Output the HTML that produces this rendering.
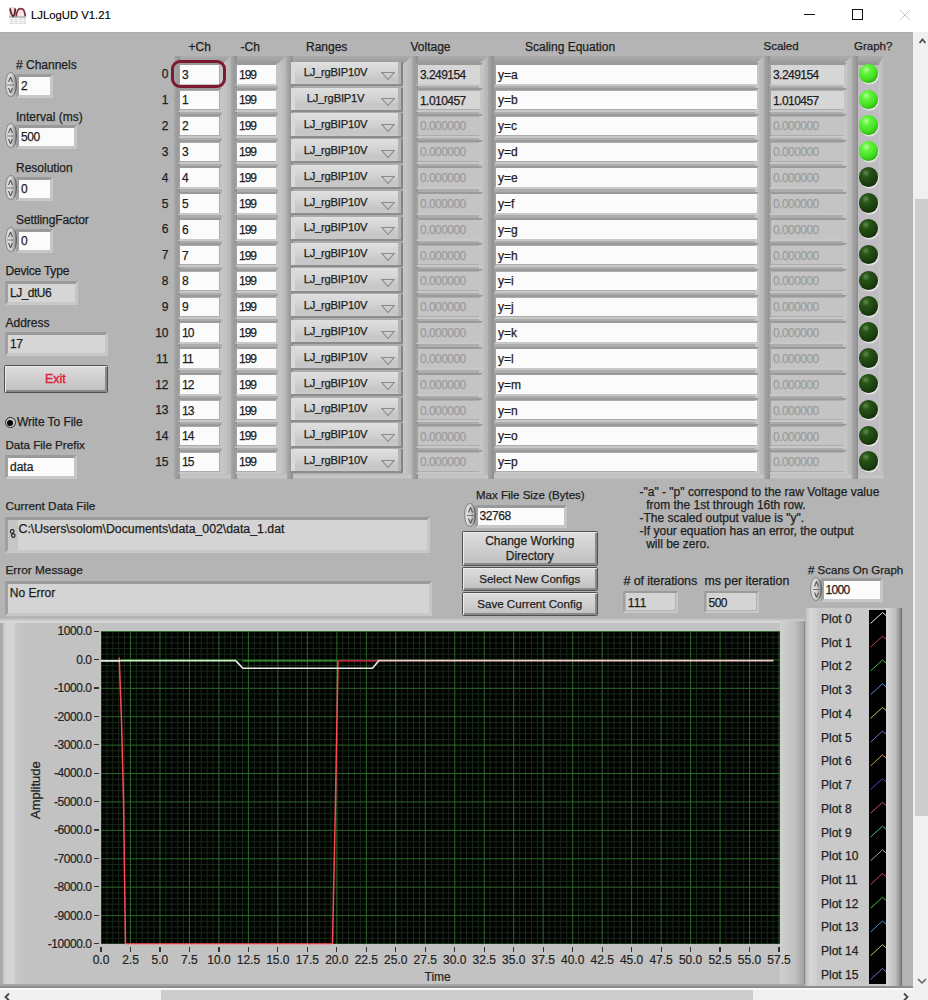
<!DOCTYPE html><html><head><meta charset="utf-8"><title>LJLogUD V1.21</title><style>
*{margin:0;padding:0;box-sizing:border-box}
html,body{width:928px;height:1000px;overflow:hidden;background:#b4b4b4;font-family:"Liberation Sans",sans-serif;font-size:12px;color:#1e1e1e}
.ab{position:absolute}
.t{position:absolute;white-space:pre;line-height:1;-webkit-text-stroke:0.25px currentColor}
.w{position:absolute;background:#fbfbfb}
.fr{position:absolute;border-style:solid;border-width:3px;border-color:#9a9a9a #c6c6c6 #c8c8c8 #a0a0a0}
.col{position:absolute;border-style:solid;border-width:1.5px 4px 4px 6px;border-color:#a2a2a2 #c9c9c9 #c6c6c6 #cbcbcb;background:#adadad}
.coli{position:absolute;border-left:2.5px solid #9a9a9a;border-right:2px solid #8f8f8f}
.btn{position:absolute;border:1.5px solid #505050;border-radius:1.5px;background:linear-gradient(#dedede,#cdcdcd 55%,#bfbfbf);box-shadow:inset 1px 1px 0 #ececec,inset -2px -2px 0 #8a8a8a}
.ring{position:absolute;background:linear-gradient(#e0e0e0,#d3d3d3 45%,#c6c6c6 80%,#c9c9c9);border-bottom:2.3px solid #8c8c8c;border-right:2.5px solid #858585;box-shadow:inset 4px 0 0 #dadada,inset -3px 0 0 #b4b4b4}
.spin{position:absolute;border-radius:50%;border:1px solid #8c8c8c;border-right-color:#5e5e5e;background:linear-gradient(90deg,#c4c4c4,#e2e2e2 25%,#d0d0d0 55%,#a8a8a8 85%,#7a7a7a);}
.led{position:absolute;width:19px;height:19.5px;border-radius:50%}
.on{background:radial-gradient(circle at 38% 30%,#b8ff9c 0,#62f43e 22%,#44e020 55%,#2aa214 85%,#1e6e12 100%);box-shadow:1px 1.5px 0 #dfe8df}
.off{background:radial-gradient(circle at 36% 30%,#5e8e4c 0,#285418 22%,#1c4010 55%,#112a08 85%,#081604 100%);box-shadow:1px 1.5px 0 #e4e4e4}
</style></head><body>
<div class="ab" style="left:0;top:0;width:928px;height:32px;background:#fff"></div>
<svg class="ab" style="left:0;top:0" width="34" height="30" viewBox="0 0 34 30"><rect x="9" y="7" width="6.5" height="9" fill="#f6dcdc"/><rect x="17" y="9" width="8" height="7" fill="#fbe6e6"/><g stroke="#d8d8d8" stroke-width="0.8" fill="none"><path d="M9 19.3H26M9 21.5H26M9 23.4H26M16 17V24M21 17V24M25 17V24M12 17V24"/></g><path d="M9 17H25.8" stroke="#9a9a9a" stroke-width="1.2"/><path d="M10 8.5C10.8 12 11.5 16 13.2 16.2C14.8 16.4 15 11 15.3 8.3" fill="none" stroke="#5c2a2c" stroke-width="1.9"/><path d="M16.3 16.5C16.5 12 17.8 8.7 20.8 8.6C23.8 8.5 25 12 25.2 16.3" fill="none" stroke="#7c3444" stroke-width="1.7"/></svg>
<div class="t" style="left:31px;top:9.834549999999998px;font-size:11.3px;color:#000;-webkit-text-stroke:0.15px #000">LJLogUD V1.21</div>
<div class="ab" style="left:804px;top:14px;width:10.5px;height:1px;background:#111"></div>
<div class="ab" style="left:852px;top:9px;width:10.5px;height:10.5px;border:1px solid #111"></div>
<svg class="ab" style="left:899px;top:9px" width="12" height="12"><path d="M0.5 0.5L11.5 11.5M11.5 0.5L0.5 11.5" stroke="#c8c8c8" stroke-width="1"/></svg>
<div class="ab" style="left:0;top:32px;width:913px;height:954px;background:#b4b4b4;border-top:1px solid #acacac"></div>
<div class="t" style="left:16px;top:58.84px;font-size:12px;color:#1e1e1e;"># Channels</div>
<div class="fr" style="left:16px;top:74px;width:36.5px;height:24px;border-width:3px"></div>
<div class="w" style="left:19px;top:77px;width:30.5px;height:18px;background:#fbfbfb"></div>
<div class="t" style="left:21px;top:79.84px;font-size:12px;color:#1e1e1e;">2</div>
<div class="spin" style="left:4.5px;top:72.0px;width:12px;height:24.5px"></div>
<svg class="ab" style="left:4px;top:72.5px" width="13" height="24"><path d="M6.5 4.0L4.5 9.0M6.5 4.0L8.5 9.0M6.5 20.0L4.5 15.0M6.5 20.0L8.5 15.0" stroke="#555" stroke-width="1.1" fill="none"/><path d="M3 12.0H10" stroke="#777" stroke-width="1"/></svg>
<div class="t" style="left:16px;top:110.84px;font-size:12px;color:#1e1e1e;">Interval (ms)</div>
<div class="fr" style="left:16px;top:125px;width:60.5px;height:24px;border-width:3px"></div>
<div class="w" style="left:19px;top:128px;width:54.5px;height:18px;background:#fbfbfb"></div>
<div class="t" style="left:21px;top:130.84px;font-size:12px;color:#1e1e1e;letter-spacing:-0.4px;">500</div>
<div class="spin" style="left:4.5px;top:123.0px;width:12px;height:24.5px"></div>
<svg class="ab" style="left:4px;top:123.5px" width="13" height="24"><path d="M6.5 4.0L4.5 9.0M6.5 4.0L8.5 9.0M6.5 20.0L4.5 15.0M6.5 20.0L8.5 15.0" stroke="#555" stroke-width="1.1" fill="none"/><path d="M3 12.0H10" stroke="#777" stroke-width="1"/></svg>
<div class="t" style="left:16px;top:162.34px;font-size:12px;color:#1e1e1e;">Resolution</div>
<div class="fr" style="left:16px;top:177px;width:36.5px;height:24px;border-width:3px"></div>
<div class="w" style="left:19px;top:180px;width:30.5px;height:18px;background:#fbfbfb"></div>
<div class="t" style="left:21px;top:182.84px;font-size:12px;color:#1e1e1e;">0</div>
<div class="spin" style="left:4.5px;top:175.0px;width:12px;height:24.5px"></div>
<svg class="ab" style="left:4px;top:175.5px" width="13" height="24"><path d="M6.5 4.0L4.5 9.0M6.5 4.0L8.5 9.0M6.5 20.0L4.5 15.0M6.5 20.0L8.5 15.0" stroke="#555" stroke-width="1.1" fill="none"/><path d="M3 12.0H10" stroke="#777" stroke-width="1"/></svg>
<div class="t" style="left:16px;top:213.84px;font-size:12px;color:#1e1e1e;letter-spacing:-0.1px;">SettlingFactor</div>
<div class="fr" style="left:16px;top:229px;width:36.5px;height:24px;border-width:3px"></div>
<div class="w" style="left:19px;top:232px;width:30.5px;height:18px;background:#fbfbfb"></div>
<div class="t" style="left:21px;top:234.84px;font-size:12px;color:#1e1e1e;">0</div>
<div class="spin" style="left:4.5px;top:227.0px;width:12px;height:24.5px"></div>
<svg class="ab" style="left:4px;top:227.5px" width="13" height="24"><path d="M6.5 4.0L4.5 9.0M6.5 4.0L8.5 9.0M6.5 20.0L4.5 15.0M6.5 20.0L8.5 15.0" stroke="#555" stroke-width="1.1" fill="none"/><path d="M3 12.0H10" stroke="#777" stroke-width="1"/></svg>
<div class="t" style="left:5.5px;top:265.14px;font-size:12px;color:#1e1e1e;letter-spacing:-0.2px;">Device Type</div>
<div class="fr" style="left:5px;top:280.5px;width:72.5px;height:24.5px;border-width:3px"></div>
<div class="w" style="left:8px;top:283.5px;width:66.5px;height:18.5px;background:#d6d6d6"></div>
<div class="t" style="left:10px;top:286.84px;font-size:12px;color:#1e1e1e;letter-spacing:-0.5px;">LJ_dtU6</div>
<div class="t" style="left:5.5px;top:316.84px;font-size:12px;color:#1e1e1e;">Address</div>
<div class="fr" style="left:5px;top:331.5px;width:103px;height:24.5px;border-width:3px"></div>
<div class="w" style="left:8px;top:334.5px;width:97px;height:18.5px;background:#d6d6d6"></div>
<div class="t" style="left:10px;top:337.84px;font-size:12px;color:#1e1e1e;letter-spacing:-0.5px;">17</div>
<div class="btn" style="left:4px;top:365px;width:104px;height:28px"></div>
<div class="t" style="left:45px;top:373.42px;font-size:12.5px;color:#e0203a;-webkit-text-stroke:0.4px #e0203a">Exit</div>
<div class="ab" style="left:4.5px;top:417px;width:11px;height:11px;border-radius:50%;border:1.2px solid #2a2a2a;background:#c8c8c8"></div>
<div class="ab" style="left:7px;top:419.5px;width:6px;height:6px;border-radius:50%;background:#000"></div>
<div class="t" style="left:17px;top:415.84px;font-size:12px;color:#1e1e1e;letter-spacing:-0.05px;">Write To File</div>
<div class="t" style="left:5.5px;top:439.18px;font-size:11.6px;color:#1e1e1e;">Data File Prefix</div>
<div class="fr" style="left:5px;top:454.5px;width:71.5px;height:24px;border-width:3px"></div>
<div class="w" style="left:8px;top:457.5px;width:65.5px;height:18px;background:#fbfbfb"></div>
<div class="t" style="left:10px;top:460.84px;font-size:12px;color:#1e1e1e;">data</div>
<div class="t" style="left:188.5px;top:40.84px;font-size:12px;color:#1e1e1e;">+Ch</div>
<div class="t" style="left:240.5px;top:40.84px;font-size:12px;color:#1e1e1e;">-Ch</div>
<div class="t" style="left:306px;top:40.84px;font-size:12px;color:#1e1e1e;">Ranges</div>
<div class="t" style="left:410.5px;top:40.84px;font-size:12px;color:#1e1e1e;">Voltage</div>
<div class="t" style="left:525px;top:40.84px;font-size:12px;color:#1e1e1e;">Scaling Equation</div>
<div class="t" style="left:763.5px;top:41.27px;font-size:11.5px;color:#1e1e1e;">Scaled</div>
<div class="t" style="left:854px;top:41.27px;font-size:11.5px;color:#1e1e1e;">Graph?</div>
<div class="ab" style="left:174px;top:56px;width:57px;height:422.5px;background:#acacac"></div>
<div class="ab" style="left:174px;top:56px;width:57px;height:8.5px;background:linear-gradient(#acacac,#a2a2a2 50%,#8f8f8f)"></div>
<div class="ab" style="left:174px;top:56px;width:6px;height:422.5px;background:linear-gradient(90deg,#a8a8a8,#9c9c9c 50%,#8c8c8c)"></div>
<div class="ab" style="left:222px;top:56px;width:9px;height:422.5px;background:linear-gradient(90deg,#c6c6c6,#c2c2c2 40%,#b4b4b4);clip-path:polygon(0 8px,9px 0,9px 100%,0 100%)"></div>
<div class="ab" style="left:180px;top:474px;width:51px;height:4.5px;background:linear-gradient(#bdbdbd,#c8c8c8 60%,#b8b8b8)"></div>
<div class="ab" style="left:231px;top:56px;width:55.5px;height:422.5px;background:#acacac"></div>
<div class="ab" style="left:231px;top:56px;width:55.5px;height:8.5px;background:linear-gradient(#acacac,#a2a2a2 50%,#8f8f8f)"></div>
<div class="ab" style="left:231px;top:56px;width:6px;height:422.5px;background:linear-gradient(90deg,#a8a8a8,#9c9c9c 50%,#8c8c8c)"></div>
<div class="ab" style="left:277.5px;top:56px;width:9px;height:422.5px;background:linear-gradient(90deg,#c6c6c6,#c2c2c2 40%,#b4b4b4);clip-path:polygon(0 8px,9px 0,9px 100%,0 100%)"></div>
<div class="ab" style="left:237px;top:474px;width:49.5px;height:4.5px;background:linear-gradient(#bdbdbd,#c8c8c8 60%,#b8b8b8)"></div>
<div class="ab" style="left:286.5px;top:56px;width:125.5px;height:422.5px;background:#acacac"></div>
<div class="ab" style="left:286.5px;top:56px;width:125.5px;height:8.5px;background:linear-gradient(#acacac,#a2a2a2 50%,#8f8f8f)"></div>
<div class="ab" style="left:286.5px;top:56px;width:6px;height:422.5px;background:linear-gradient(90deg,#a8a8a8,#9c9c9c 50%,#8c8c8c)"></div>
<div class="ab" style="left:403px;top:56px;width:9px;height:422.5px;background:linear-gradient(90deg,#c6c6c6,#c2c2c2 40%,#b4b4b4);clip-path:polygon(0 8px,9px 0,9px 100%,0 100%)"></div>
<div class="ab" style="left:292.5px;top:474px;width:119.5px;height:4.5px;background:linear-gradient(#bdbdbd,#c8c8c8 60%,#b8b8b8)"></div>
<div class="ab" style="left:412px;top:56px;width:76px;height:422.5px;background:#acacac"></div>
<div class="ab" style="left:412px;top:56px;width:76px;height:8.5px;background:linear-gradient(#acacac,#a2a2a2 50%,#8f8f8f)"></div>
<div class="ab" style="left:412px;top:56px;width:6px;height:422.5px;background:linear-gradient(90deg,#a8a8a8,#9c9c9c 50%,#8c8c8c)"></div>
<div class="ab" style="left:479px;top:56px;width:9px;height:422.5px;background:linear-gradient(90deg,#c6c6c6,#c2c2c2 40%,#b4b4b4);clip-path:polygon(0 8px,9px 0,9px 100%,0 100%)"></div>
<div class="ab" style="left:418px;top:474px;width:70px;height:4.5px;background:linear-gradient(#bdbdbd,#c8c8c8 60%,#b8b8b8)"></div>
<div class="ab" style="left:488px;top:56px;width:276px;height:422.5px;background:#acacac"></div>
<div class="ab" style="left:488px;top:56px;width:276px;height:8.5px;background:linear-gradient(#acacac,#a2a2a2 50%,#8f8f8f)"></div>
<div class="ab" style="left:488px;top:56px;width:6px;height:422.5px;background:linear-gradient(90deg,#a8a8a8,#9c9c9c 50%,#8c8c8c)"></div>
<div class="ab" style="left:755px;top:56px;width:9px;height:422.5px;background:linear-gradient(90deg,#c6c6c6,#c2c2c2 40%,#b4b4b4);clip-path:polygon(0 8px,9px 0,9px 100%,0 100%)"></div>
<div class="ab" style="left:494px;top:474px;width:270px;height:4.5px;background:linear-gradient(#bdbdbd,#c8c8c8 60%,#b8b8b8)"></div>
<div class="ab" style="left:764px;top:56px;width:88px;height:422.5px;background:#acacac"></div>
<div class="ab" style="left:764px;top:56px;width:88px;height:8.5px;background:linear-gradient(#acacac,#a2a2a2 50%,#8f8f8f)"></div>
<div class="ab" style="left:764px;top:56px;width:6px;height:422.5px;background:linear-gradient(90deg,#a8a8a8,#9c9c9c 50%,#8c8c8c)"></div>
<div class="ab" style="left:843px;top:56px;width:9px;height:422.5px;background:linear-gradient(90deg,#c6c6c6,#c2c2c2 40%,#b4b4b4);clip-path:polygon(0 8px,9px 0,9px 100%,0 100%)"></div>
<div class="ab" style="left:770px;top:474px;width:82px;height:4.5px;background:linear-gradient(#bdbdbd,#c8c8c8 60%,#b8b8b8)"></div>
<div class="ab" style="left:852px;top:56px;width:32px;height:422.5px;background:#bfbdc2"></div>
<div class="ab" style="left:852px;top:56px;width:32px;height:8.5px;background:linear-gradient(#acacac,#a2a2a2 50%,#8f8f8f)"></div>
<div class="ab" style="left:852px;top:56px;width:6px;height:422.5px;background:linear-gradient(90deg,#a8a8a8,#9c9c9c 50%,#8c8c8c)"></div>
<div class="ab" style="left:879px;top:56px;width:5px;height:422.5px;background:linear-gradient(90deg,#c6c6c6,#c2c2c2 40%,#b4b4b4);clip-path:polygon(0 8px,5px 0,5px 100%,0 100%)"></div>
<div class="ab" style="left:858px;top:474px;width:26px;height:4.5px;background:linear-gradient(#bdbdbd,#c8c8c8 60%,#b8b8b8)"></div>
<div class="t" style="left:140px;width:28.5px;text-align:right;top:68.44px;font-size:12px">0</div>
<div class="fr" style="left:177.5px;top:62.5px;width:44.0px;height:23.5px;border-width:2.5px"></div>
<div class="w" style="left:180px;top:65.0px;width:39px;height:18.5px;background:#fbfbfb"></div>
<div class="t" style="left:182px;top:68.64px;font-size:12px;color:#1e1e1e;letter-spacing:-0.8px;">3</div>
<div class="fr" style="left:234.5px;top:62.5px;width:43.5px;height:23.5px;border-width:2.5px"></div>
<div class="w" style="left:237px;top:65.0px;width:38.5px;height:18.5px;background:#fbfbfb"></div>
<div class="t" style="left:239px;top:68.64px;font-size:12px;color:#1e1e1e;letter-spacing:-1px;">199</div>
<div class="ring" style="left:290.7px;top:61.70px;width:112.3px;height:24.2px"></div>
<div class="t" style="left:291px;width:89px;text-align:center;top:67.42px;font-size:11.2px;letter-spacing:-0.2px">LJ_rgBIP10V</div>
<svg class="ab" style="left:381px;top:72.30px" width="14" height="8"><path d="M0.8 0.5H13.2L7 7.5Z" fill="none" stroke="#8a8a8a" stroke-width="1.1"/></svg>
<div class="fr" style="left:415.5px;top:62.5px;width:67.0px;height:23.5px;border-width:2.5px"></div>
<div class="w" style="left:418px;top:65.0px;width:62px;height:18.5px;background:#d6d6d6"></div>
<div class="t" style="left:420px;top:68.74px;font-size:12px;color:#1e1e1e;letter-spacing:-0.55px;">3.249154</div>
<div class="fr" style="left:768.5px;top:62.5px;width:78.0px;height:23.5px;border-width:2.5px"></div>
<div class="w" style="left:771px;top:65.0px;width:73px;height:18.5px;background:#d6d6d6"></div>
<div class="t" style="left:773px;top:68.74px;font-size:12px;color:#1e1e1e;letter-spacing:-0.55px;">3.249154</div>
<div class="fr" style="left:493.5px;top:62.5px;width:265.5px;height:23.5px;border-width:2.5px"></div>
<div class="w" style="left:496px;top:65.0px;width:260.5px;height:18.5px;background:#fbfbfb"></div>
<div class="t" style="left:498px;top:68.64px;font-size:12px;color:#1e1e1e;">y=a</div>
<div class="led on" style="left:859px;top:63.80px"></div>
<div class="t" style="left:140px;width:28.5px;text-align:right;top:94.28px;font-size:12px">1</div>
<div class="fr" style="left:177.5px;top:88.34px;width:44.0px;height:23.5px;border-width:2.5px"></div>
<div class="w" style="left:180px;top:90.84px;width:39px;height:18.5px;background:#fbfbfb"></div>
<div class="t" style="left:182px;top:94.48px;font-size:12px;color:#1e1e1e;letter-spacing:-0.8px;">1</div>
<div class="fr" style="left:234.5px;top:88.34px;width:43.5px;height:23.5px;border-width:2.5px"></div>
<div class="w" style="left:237px;top:90.84px;width:38.5px;height:18.5px;background:#fbfbfb"></div>
<div class="t" style="left:239px;top:94.48px;font-size:12px;color:#1e1e1e;letter-spacing:-1px;">199</div>
<div class="ring" style="left:290.7px;top:87.54px;width:112.3px;height:24.2px"></div>
<div class="t" style="left:291px;width:89px;text-align:center;top:93.26px;font-size:11.2px;letter-spacing:-0.2px">LJ_rgBIP1V</div>
<svg class="ab" style="left:381px;top:98.14px" width="14" height="8"><path d="M0.8 0.5H13.2L7 7.5Z" fill="none" stroke="#8a8a8a" stroke-width="1.1"/></svg>
<div class="fr" style="left:415.5px;top:88.34px;width:67.0px;height:23.5px;border-width:2.5px"></div>
<div class="w" style="left:418px;top:90.84px;width:62px;height:18.5px;background:#d6d6d6"></div>
<div class="t" style="left:420px;top:94.58px;font-size:12px;color:#1e1e1e;letter-spacing:-0.55px;">1.010457</div>
<div class="fr" style="left:768.5px;top:88.34px;width:78.0px;height:23.5px;border-width:2.5px"></div>
<div class="w" style="left:771px;top:90.84px;width:73px;height:18.5px;background:#d6d6d6"></div>
<div class="t" style="left:773px;top:94.58px;font-size:12px;color:#1e1e1e;letter-spacing:-0.55px;">1.010457</div>
<div class="fr" style="left:493.5px;top:88.34px;width:265.5px;height:23.5px;border-width:2.5px"></div>
<div class="w" style="left:496px;top:90.84px;width:260.5px;height:18.5px;background:#fbfbfb"></div>
<div class="t" style="left:498px;top:94.48px;font-size:12px;color:#1e1e1e;">y=b</div>
<div class="led on" style="left:859px;top:89.64px"></div>
<div class="t" style="left:140px;width:28.5px;text-align:right;top:120.12px;font-size:12px">2</div>
<div class="fr" style="left:177.5px;top:114.18px;width:44.0px;height:23.5px;border-width:2.5px"></div>
<div class="w" style="left:180px;top:116.68px;width:39px;height:18.5px;background:#fbfbfb"></div>
<div class="t" style="left:182px;top:120.32px;font-size:12px;color:#1e1e1e;letter-spacing:-0.8px;">2</div>
<div class="fr" style="left:234.5px;top:114.18px;width:43.5px;height:23.5px;border-width:2.5px"></div>
<div class="w" style="left:237px;top:116.68px;width:38.5px;height:18.5px;background:#fbfbfb"></div>
<div class="t" style="left:239px;top:120.32px;font-size:12px;color:#1e1e1e;letter-spacing:-1px;">199</div>
<div class="ring" style="left:290.7px;top:113.38px;width:112.3px;height:24.2px"></div>
<div class="t" style="left:291px;width:89px;text-align:center;top:119.10px;font-size:11.2px;letter-spacing:-0.2px">LJ_rgBIP10V</div>
<svg class="ab" style="left:381px;top:123.98px" width="14" height="8"><path d="M0.8 0.5H13.2L7 7.5Z" fill="none" stroke="#8a8a8a" stroke-width="1.1"/></svg>
<div class="fr" style="left:415.5px;top:114.18px;width:67.0px;height:23.5px;border-width:2.5px"></div>
<div class="w" style="left:418px;top:116.68px;width:62px;height:18.5px;background:#c4c4c4"></div>
<div class="t" style="left:420px;top:120.42px;font-size:12px;color:#9c9c9c;letter-spacing:-0.55px;">0.000000</div>
<div class="fr" style="left:768.5px;top:114.18px;width:78.0px;height:23.5px;border-width:2.5px"></div>
<div class="w" style="left:771px;top:116.68px;width:73px;height:18.5px;background:#c4c4c4"></div>
<div class="t" style="left:773px;top:120.42px;font-size:12px;color:#9c9c9c;letter-spacing:-0.55px;">0.000000</div>
<div class="fr" style="left:493.5px;top:114.18px;width:265.5px;height:23.5px;border-width:2.5px"></div>
<div class="w" style="left:496px;top:116.68px;width:260.5px;height:18.5px;background:#fbfbfb"></div>
<div class="t" style="left:498px;top:120.32px;font-size:12px;color:#1e1e1e;">y=c</div>
<div class="led on" style="left:859px;top:115.48px"></div>
<div class="t" style="left:140px;width:28.5px;text-align:right;top:145.96px;font-size:12px">3</div>
<div class="fr" style="left:177.5px;top:140.01999999999998px;width:44.0px;height:23.5px;border-width:2.5px"></div>
<div class="w" style="left:180px;top:142.51999999999998px;width:39px;height:18.5px;background:#fbfbfb"></div>
<div class="t" style="left:182px;top:146.16px;font-size:12px;color:#1e1e1e;letter-spacing:-0.8px;">3</div>
<div class="fr" style="left:234.5px;top:140.01999999999998px;width:43.5px;height:23.5px;border-width:2.5px"></div>
<div class="w" style="left:237px;top:142.51999999999998px;width:38.5px;height:18.5px;background:#fbfbfb"></div>
<div class="t" style="left:239px;top:146.16px;font-size:12px;color:#1e1e1e;letter-spacing:-1px;">199</div>
<div class="ring" style="left:290.7px;top:139.22px;width:112.3px;height:24.2px"></div>
<div class="t" style="left:291px;width:89px;text-align:center;top:144.94px;font-size:11.2px;letter-spacing:-0.2px">LJ_rgBIP10V</div>
<svg class="ab" style="left:381px;top:149.82px" width="14" height="8"><path d="M0.8 0.5H13.2L7 7.5Z" fill="none" stroke="#8a8a8a" stroke-width="1.1"/></svg>
<div class="fr" style="left:415.5px;top:140.01999999999998px;width:67.0px;height:23.5px;border-width:2.5px"></div>
<div class="w" style="left:418px;top:142.51999999999998px;width:62px;height:18.5px;background:#c4c4c4"></div>
<div class="t" style="left:420px;top:146.26px;font-size:12px;color:#9c9c9c;letter-spacing:-0.55px;">0.000000</div>
<div class="fr" style="left:768.5px;top:140.01999999999998px;width:78.0px;height:23.5px;border-width:2.5px"></div>
<div class="w" style="left:771px;top:142.51999999999998px;width:73px;height:18.5px;background:#c4c4c4"></div>
<div class="t" style="left:773px;top:146.26px;font-size:12px;color:#9c9c9c;letter-spacing:-0.55px;">0.000000</div>
<div class="fr" style="left:493.5px;top:140.01999999999998px;width:265.5px;height:23.5px;border-width:2.5px"></div>
<div class="w" style="left:496px;top:142.51999999999998px;width:260.5px;height:18.5px;background:#fbfbfb"></div>
<div class="t" style="left:498px;top:146.16px;font-size:12px;color:#1e1e1e;">y=d</div>
<div class="led on" style="left:859px;top:141.32px"></div>
<div class="t" style="left:140px;width:28.5px;text-align:right;top:171.80px;font-size:12px">4</div>
<div class="fr" style="left:177.5px;top:165.86px;width:44.0px;height:23.5px;border-width:2.5px"></div>
<div class="w" style="left:180px;top:168.36px;width:39px;height:18.5px;background:#fbfbfb"></div>
<div class="t" style="left:182px;top:172.00px;font-size:12px;color:#1e1e1e;letter-spacing:-0.8px;">4</div>
<div class="fr" style="left:234.5px;top:165.86px;width:43.5px;height:23.5px;border-width:2.5px"></div>
<div class="w" style="left:237px;top:168.36px;width:38.5px;height:18.5px;background:#fbfbfb"></div>
<div class="t" style="left:239px;top:172.00px;font-size:12px;color:#1e1e1e;letter-spacing:-1px;">199</div>
<div class="ring" style="left:290.7px;top:165.06px;width:112.3px;height:24.2px"></div>
<div class="t" style="left:291px;width:89px;text-align:center;top:170.78px;font-size:11.2px;letter-spacing:-0.2px">LJ_rgBIP10V</div>
<svg class="ab" style="left:381px;top:175.66px" width="14" height="8"><path d="M0.8 0.5H13.2L7 7.5Z" fill="none" stroke="#8a8a8a" stroke-width="1.1"/></svg>
<div class="fr" style="left:415.5px;top:165.86px;width:67.0px;height:23.5px;border-width:2.5px"></div>
<div class="w" style="left:418px;top:168.36px;width:62px;height:18.5px;background:#c4c4c4"></div>
<div class="t" style="left:420px;top:172.10px;font-size:12px;color:#9c9c9c;letter-spacing:-0.55px;">0.000000</div>
<div class="fr" style="left:768.5px;top:165.86px;width:78.0px;height:23.5px;border-width:2.5px"></div>
<div class="w" style="left:771px;top:168.36px;width:73px;height:18.5px;background:#c4c4c4"></div>
<div class="t" style="left:773px;top:172.10px;font-size:12px;color:#9c9c9c;letter-spacing:-0.55px;">0.000000</div>
<div class="fr" style="left:493.5px;top:165.86px;width:265.5px;height:23.5px;border-width:2.5px"></div>
<div class="w" style="left:496px;top:168.36px;width:260.5px;height:18.5px;background:#fbfbfb"></div>
<div class="t" style="left:498px;top:172.00px;font-size:12px;color:#1e1e1e;">y=e</div>
<div class="led off" style="left:859px;top:167.16px"></div>
<div class="t" style="left:140px;width:28.5px;text-align:right;top:197.64px;font-size:12px">5</div>
<div class="fr" style="left:177.5px;top:191.7px;width:44.0px;height:23.5px;border-width:2.5px"></div>
<div class="w" style="left:180px;top:194.2px;width:39px;height:18.5px;background:#fbfbfb"></div>
<div class="t" style="left:182px;top:197.84px;font-size:12px;color:#1e1e1e;letter-spacing:-0.8px;">5</div>
<div class="fr" style="left:234.5px;top:191.7px;width:43.5px;height:23.5px;border-width:2.5px"></div>
<div class="w" style="left:237px;top:194.2px;width:38.5px;height:18.5px;background:#fbfbfb"></div>
<div class="t" style="left:239px;top:197.84px;font-size:12px;color:#1e1e1e;letter-spacing:-1px;">199</div>
<div class="ring" style="left:290.7px;top:190.90px;width:112.3px;height:24.2px"></div>
<div class="t" style="left:291px;width:89px;text-align:center;top:196.62px;font-size:11.2px;letter-spacing:-0.2px">LJ_rgBIP10V</div>
<svg class="ab" style="left:381px;top:201.50px" width="14" height="8"><path d="M0.8 0.5H13.2L7 7.5Z" fill="none" stroke="#8a8a8a" stroke-width="1.1"/></svg>
<div class="fr" style="left:415.5px;top:191.7px;width:67.0px;height:23.5px;border-width:2.5px"></div>
<div class="w" style="left:418px;top:194.2px;width:62px;height:18.5px;background:#c4c4c4"></div>
<div class="t" style="left:420px;top:197.94px;font-size:12px;color:#9c9c9c;letter-spacing:-0.55px;">0.000000</div>
<div class="fr" style="left:768.5px;top:191.7px;width:78.0px;height:23.5px;border-width:2.5px"></div>
<div class="w" style="left:771px;top:194.2px;width:73px;height:18.5px;background:#c4c4c4"></div>
<div class="t" style="left:773px;top:197.94px;font-size:12px;color:#9c9c9c;letter-spacing:-0.55px;">0.000000</div>
<div class="fr" style="left:493.5px;top:191.7px;width:265.5px;height:23.5px;border-width:2.5px"></div>
<div class="w" style="left:496px;top:194.2px;width:260.5px;height:18.5px;background:#fbfbfb"></div>
<div class="t" style="left:498px;top:197.84px;font-size:12px;color:#1e1e1e;">y=f</div>
<div class="led off" style="left:859px;top:193.00px"></div>
<div class="t" style="left:140px;width:28.5px;text-align:right;top:223.48px;font-size:12px">6</div>
<div class="fr" style="left:177.5px;top:217.54px;width:44.0px;height:23.5px;border-width:2.5px"></div>
<div class="w" style="left:180px;top:220.04px;width:39px;height:18.5px;background:#fbfbfb"></div>
<div class="t" style="left:182px;top:223.68px;font-size:12px;color:#1e1e1e;letter-spacing:-0.8px;">6</div>
<div class="fr" style="left:234.5px;top:217.54px;width:43.5px;height:23.5px;border-width:2.5px"></div>
<div class="w" style="left:237px;top:220.04px;width:38.5px;height:18.5px;background:#fbfbfb"></div>
<div class="t" style="left:239px;top:223.68px;font-size:12px;color:#1e1e1e;letter-spacing:-1px;">199</div>
<div class="ring" style="left:290.7px;top:216.74px;width:112.3px;height:24.2px"></div>
<div class="t" style="left:291px;width:89px;text-align:center;top:222.46px;font-size:11.2px;letter-spacing:-0.2px">LJ_rgBIP10V</div>
<svg class="ab" style="left:381px;top:227.34px" width="14" height="8"><path d="M0.8 0.5H13.2L7 7.5Z" fill="none" stroke="#8a8a8a" stroke-width="1.1"/></svg>
<div class="fr" style="left:415.5px;top:217.54px;width:67.0px;height:23.5px;border-width:2.5px"></div>
<div class="w" style="left:418px;top:220.04px;width:62px;height:18.5px;background:#c4c4c4"></div>
<div class="t" style="left:420px;top:223.78px;font-size:12px;color:#9c9c9c;letter-spacing:-0.55px;">0.000000</div>
<div class="fr" style="left:768.5px;top:217.54px;width:78.0px;height:23.5px;border-width:2.5px"></div>
<div class="w" style="left:771px;top:220.04px;width:73px;height:18.5px;background:#c4c4c4"></div>
<div class="t" style="left:773px;top:223.78px;font-size:12px;color:#9c9c9c;letter-spacing:-0.55px;">0.000000</div>
<div class="fr" style="left:493.5px;top:217.54px;width:265.5px;height:23.5px;border-width:2.5px"></div>
<div class="w" style="left:496px;top:220.04px;width:260.5px;height:18.5px;background:#fbfbfb"></div>
<div class="t" style="left:498px;top:223.68px;font-size:12px;color:#1e1e1e;">y=g</div>
<div class="led off" style="left:859px;top:218.84px"></div>
<div class="t" style="left:140px;width:28.5px;text-align:right;top:249.32px;font-size:12px">7</div>
<div class="fr" style="left:177.5px;top:243.38px;width:44.0px;height:23.5px;border-width:2.5px"></div>
<div class="w" style="left:180px;top:245.88px;width:39px;height:18.5px;background:#fbfbfb"></div>
<div class="t" style="left:182px;top:249.52px;font-size:12px;color:#1e1e1e;letter-spacing:-0.8px;">7</div>
<div class="fr" style="left:234.5px;top:243.38px;width:43.5px;height:23.5px;border-width:2.5px"></div>
<div class="w" style="left:237px;top:245.88px;width:38.5px;height:18.5px;background:#fbfbfb"></div>
<div class="t" style="left:239px;top:249.52px;font-size:12px;color:#1e1e1e;letter-spacing:-1px;">199</div>
<div class="ring" style="left:290.7px;top:242.58px;width:112.3px;height:24.2px"></div>
<div class="t" style="left:291px;width:89px;text-align:center;top:248.30px;font-size:11.2px;letter-spacing:-0.2px">LJ_rgBIP10V</div>
<svg class="ab" style="left:381px;top:253.18px" width="14" height="8"><path d="M0.8 0.5H13.2L7 7.5Z" fill="none" stroke="#8a8a8a" stroke-width="1.1"/></svg>
<div class="fr" style="left:415.5px;top:243.38px;width:67.0px;height:23.5px;border-width:2.5px"></div>
<div class="w" style="left:418px;top:245.88px;width:62px;height:18.5px;background:#c4c4c4"></div>
<div class="t" style="left:420px;top:249.62px;font-size:12px;color:#9c9c9c;letter-spacing:-0.55px;">0.000000</div>
<div class="fr" style="left:768.5px;top:243.38px;width:78.0px;height:23.5px;border-width:2.5px"></div>
<div class="w" style="left:771px;top:245.88px;width:73px;height:18.5px;background:#c4c4c4"></div>
<div class="t" style="left:773px;top:249.62px;font-size:12px;color:#9c9c9c;letter-spacing:-0.55px;">0.000000</div>
<div class="fr" style="left:493.5px;top:243.38px;width:265.5px;height:23.5px;border-width:2.5px"></div>
<div class="w" style="left:496px;top:245.88px;width:260.5px;height:18.5px;background:#fbfbfb"></div>
<div class="t" style="left:498px;top:249.52px;font-size:12px;color:#1e1e1e;">y=h</div>
<div class="led off" style="left:859px;top:244.68px"></div>
<div class="t" style="left:140px;width:28.5px;text-align:right;top:275.16px;font-size:12px">8</div>
<div class="fr" style="left:177.5px;top:269.22px;width:44.0px;height:23.5px;border-width:2.5px"></div>
<div class="w" style="left:180px;top:271.72px;width:39px;height:18.5px;background:#fbfbfb"></div>
<div class="t" style="left:182px;top:275.36px;font-size:12px;color:#1e1e1e;letter-spacing:-0.8px;">8</div>
<div class="fr" style="left:234.5px;top:269.22px;width:43.5px;height:23.5px;border-width:2.5px"></div>
<div class="w" style="left:237px;top:271.72px;width:38.5px;height:18.5px;background:#fbfbfb"></div>
<div class="t" style="left:239px;top:275.36px;font-size:12px;color:#1e1e1e;letter-spacing:-1px;">199</div>
<div class="ring" style="left:290.7px;top:268.42px;width:112.3px;height:24.2px"></div>
<div class="t" style="left:291px;width:89px;text-align:center;top:274.14px;font-size:11.2px;letter-spacing:-0.2px">LJ_rgBIP10V</div>
<svg class="ab" style="left:381px;top:279.02px" width="14" height="8"><path d="M0.8 0.5H13.2L7 7.5Z" fill="none" stroke="#8a8a8a" stroke-width="1.1"/></svg>
<div class="fr" style="left:415.5px;top:269.22px;width:67.0px;height:23.5px;border-width:2.5px"></div>
<div class="w" style="left:418px;top:271.72px;width:62px;height:18.5px;background:#c4c4c4"></div>
<div class="t" style="left:420px;top:275.46px;font-size:12px;color:#9c9c9c;letter-spacing:-0.55px;">0.000000</div>
<div class="fr" style="left:768.5px;top:269.22px;width:78.0px;height:23.5px;border-width:2.5px"></div>
<div class="w" style="left:771px;top:271.72px;width:73px;height:18.5px;background:#c4c4c4"></div>
<div class="t" style="left:773px;top:275.46px;font-size:12px;color:#9c9c9c;letter-spacing:-0.55px;">0.000000</div>
<div class="fr" style="left:493.5px;top:269.22px;width:265.5px;height:23.5px;border-width:2.5px"></div>
<div class="w" style="left:496px;top:271.72px;width:260.5px;height:18.5px;background:#fbfbfb"></div>
<div class="t" style="left:498px;top:275.36px;font-size:12px;color:#1e1e1e;">y=i</div>
<div class="led off" style="left:859px;top:270.52px"></div>
<div class="t" style="left:140px;width:28.5px;text-align:right;top:301.00px;font-size:12px">9</div>
<div class="fr" style="left:177.5px;top:295.06px;width:44.0px;height:23.5px;border-width:2.5px"></div>
<div class="w" style="left:180px;top:297.56px;width:39px;height:18.5px;background:#fbfbfb"></div>
<div class="t" style="left:182px;top:301.20px;font-size:12px;color:#1e1e1e;letter-spacing:-0.8px;">9</div>
<div class="fr" style="left:234.5px;top:295.06px;width:43.5px;height:23.5px;border-width:2.5px"></div>
<div class="w" style="left:237px;top:297.56px;width:38.5px;height:18.5px;background:#fbfbfb"></div>
<div class="t" style="left:239px;top:301.20px;font-size:12px;color:#1e1e1e;letter-spacing:-1px;">199</div>
<div class="ring" style="left:290.7px;top:294.26px;width:112.3px;height:24.2px"></div>
<div class="t" style="left:291px;width:89px;text-align:center;top:299.98px;font-size:11.2px;letter-spacing:-0.2px">LJ_rgBIP10V</div>
<svg class="ab" style="left:381px;top:304.86px" width="14" height="8"><path d="M0.8 0.5H13.2L7 7.5Z" fill="none" stroke="#8a8a8a" stroke-width="1.1"/></svg>
<div class="fr" style="left:415.5px;top:295.06px;width:67.0px;height:23.5px;border-width:2.5px"></div>
<div class="w" style="left:418px;top:297.56px;width:62px;height:18.5px;background:#c4c4c4"></div>
<div class="t" style="left:420px;top:301.30px;font-size:12px;color:#9c9c9c;letter-spacing:-0.55px;">0.000000</div>
<div class="fr" style="left:768.5px;top:295.06px;width:78.0px;height:23.5px;border-width:2.5px"></div>
<div class="w" style="left:771px;top:297.56px;width:73px;height:18.5px;background:#c4c4c4"></div>
<div class="t" style="left:773px;top:301.30px;font-size:12px;color:#9c9c9c;letter-spacing:-0.55px;">0.000000</div>
<div class="fr" style="left:493.5px;top:295.06px;width:265.5px;height:23.5px;border-width:2.5px"></div>
<div class="w" style="left:496px;top:297.56px;width:260.5px;height:18.5px;background:#fbfbfb"></div>
<div class="t" style="left:498px;top:301.20px;font-size:12px;color:#1e1e1e;">y=j</div>
<div class="led off" style="left:859px;top:296.36px"></div>
<div class="t" style="left:140px;width:28.5px;text-align:right;top:326.84px;font-size:12px">10</div>
<div class="fr" style="left:177.5px;top:320.9px;width:44.0px;height:23.5px;border-width:2.5px"></div>
<div class="w" style="left:180px;top:323.4px;width:39px;height:18.5px;background:#fbfbfb"></div>
<div class="t" style="left:182px;top:327.04px;font-size:12px;color:#1e1e1e;letter-spacing:-0.8px;">10</div>
<div class="fr" style="left:234.5px;top:320.9px;width:43.5px;height:23.5px;border-width:2.5px"></div>
<div class="w" style="left:237px;top:323.4px;width:38.5px;height:18.5px;background:#fbfbfb"></div>
<div class="t" style="left:239px;top:327.04px;font-size:12px;color:#1e1e1e;letter-spacing:-1px;">199</div>
<div class="ring" style="left:290.7px;top:320.10px;width:112.3px;height:24.2px"></div>
<div class="t" style="left:291px;width:89px;text-align:center;top:325.82px;font-size:11.2px;letter-spacing:-0.2px">LJ_rgBIP10V</div>
<svg class="ab" style="left:381px;top:330.70px" width="14" height="8"><path d="M0.8 0.5H13.2L7 7.5Z" fill="none" stroke="#8a8a8a" stroke-width="1.1"/></svg>
<div class="fr" style="left:415.5px;top:320.9px;width:67.0px;height:23.5px;border-width:2.5px"></div>
<div class="w" style="left:418px;top:323.4px;width:62px;height:18.5px;background:#c4c4c4"></div>
<div class="t" style="left:420px;top:327.14px;font-size:12px;color:#9c9c9c;letter-spacing:-0.55px;">0.000000</div>
<div class="fr" style="left:768.5px;top:320.9px;width:78.0px;height:23.5px;border-width:2.5px"></div>
<div class="w" style="left:771px;top:323.4px;width:73px;height:18.5px;background:#c4c4c4"></div>
<div class="t" style="left:773px;top:327.14px;font-size:12px;color:#9c9c9c;letter-spacing:-0.55px;">0.000000</div>
<div class="fr" style="left:493.5px;top:320.9px;width:265.5px;height:23.5px;border-width:2.5px"></div>
<div class="w" style="left:496px;top:323.4px;width:260.5px;height:18.5px;background:#fbfbfb"></div>
<div class="t" style="left:498px;top:327.04px;font-size:12px;color:#1e1e1e;">y=k</div>
<div class="led off" style="left:859px;top:322.20px"></div>
<div class="t" style="left:140px;width:28.5px;text-align:right;top:352.68px;font-size:12px">11</div>
<div class="fr" style="left:177.5px;top:346.74px;width:44.0px;height:23.5px;border-width:2.5px"></div>
<div class="w" style="left:180px;top:349.24px;width:39px;height:18.5px;background:#fbfbfb"></div>
<div class="t" style="left:182px;top:352.88px;font-size:12px;color:#1e1e1e;letter-spacing:-0.8px;">11</div>
<div class="fr" style="left:234.5px;top:346.74px;width:43.5px;height:23.5px;border-width:2.5px"></div>
<div class="w" style="left:237px;top:349.24px;width:38.5px;height:18.5px;background:#fbfbfb"></div>
<div class="t" style="left:239px;top:352.88px;font-size:12px;color:#1e1e1e;letter-spacing:-1px;">199</div>
<div class="ring" style="left:290.7px;top:345.94px;width:112.3px;height:24.2px"></div>
<div class="t" style="left:291px;width:89px;text-align:center;top:351.66px;font-size:11.2px;letter-spacing:-0.2px">LJ_rgBIP10V</div>
<svg class="ab" style="left:381px;top:356.54px" width="14" height="8"><path d="M0.8 0.5H13.2L7 7.5Z" fill="none" stroke="#8a8a8a" stroke-width="1.1"/></svg>
<div class="fr" style="left:415.5px;top:346.74px;width:67.0px;height:23.5px;border-width:2.5px"></div>
<div class="w" style="left:418px;top:349.24px;width:62px;height:18.5px;background:#c4c4c4"></div>
<div class="t" style="left:420px;top:352.98px;font-size:12px;color:#9c9c9c;letter-spacing:-0.55px;">0.000000</div>
<div class="fr" style="left:768.5px;top:346.74px;width:78.0px;height:23.5px;border-width:2.5px"></div>
<div class="w" style="left:771px;top:349.24px;width:73px;height:18.5px;background:#c4c4c4"></div>
<div class="t" style="left:773px;top:352.98px;font-size:12px;color:#9c9c9c;letter-spacing:-0.55px;">0.000000</div>
<div class="fr" style="left:493.5px;top:346.74px;width:265.5px;height:23.5px;border-width:2.5px"></div>
<div class="w" style="left:496px;top:349.24px;width:260.5px;height:18.5px;background:#fbfbfb"></div>
<div class="t" style="left:498px;top:352.88px;font-size:12px;color:#1e1e1e;">y=l</div>
<div class="led off" style="left:859px;top:348.04px"></div>
<div class="t" style="left:140px;width:28.5px;text-align:right;top:378.52px;font-size:12px">12</div>
<div class="fr" style="left:177.5px;top:372.58px;width:44.0px;height:23.5px;border-width:2.5px"></div>
<div class="w" style="left:180px;top:375.08px;width:39px;height:18.5px;background:#fbfbfb"></div>
<div class="t" style="left:182px;top:378.72px;font-size:12px;color:#1e1e1e;letter-spacing:-0.8px;">12</div>
<div class="fr" style="left:234.5px;top:372.58px;width:43.5px;height:23.5px;border-width:2.5px"></div>
<div class="w" style="left:237px;top:375.08px;width:38.5px;height:18.5px;background:#fbfbfb"></div>
<div class="t" style="left:239px;top:378.72px;font-size:12px;color:#1e1e1e;letter-spacing:-1px;">199</div>
<div class="ring" style="left:290.7px;top:371.78px;width:112.3px;height:24.2px"></div>
<div class="t" style="left:291px;width:89px;text-align:center;top:377.50px;font-size:11.2px;letter-spacing:-0.2px">LJ_rgBIP10V</div>
<svg class="ab" style="left:381px;top:382.38px" width="14" height="8"><path d="M0.8 0.5H13.2L7 7.5Z" fill="none" stroke="#8a8a8a" stroke-width="1.1"/></svg>
<div class="fr" style="left:415.5px;top:372.58px;width:67.0px;height:23.5px;border-width:2.5px"></div>
<div class="w" style="left:418px;top:375.08px;width:62px;height:18.5px;background:#c4c4c4"></div>
<div class="t" style="left:420px;top:378.82px;font-size:12px;color:#9c9c9c;letter-spacing:-0.55px;">0.000000</div>
<div class="fr" style="left:768.5px;top:372.58px;width:78.0px;height:23.5px;border-width:2.5px"></div>
<div class="w" style="left:771px;top:375.08px;width:73px;height:18.5px;background:#c4c4c4"></div>
<div class="t" style="left:773px;top:378.82px;font-size:12px;color:#9c9c9c;letter-spacing:-0.55px;">0.000000</div>
<div class="fr" style="left:493.5px;top:372.58px;width:265.5px;height:23.5px;border-width:2.5px"></div>
<div class="w" style="left:496px;top:375.08px;width:260.5px;height:18.5px;background:#fbfbfb"></div>
<div class="t" style="left:498px;top:378.72px;font-size:12px;color:#1e1e1e;">y=m</div>
<div class="led off" style="left:859px;top:373.88px"></div>
<div class="t" style="left:140px;width:28.5px;text-align:right;top:404.36px;font-size:12px">13</div>
<div class="fr" style="left:177.5px;top:398.42px;width:44.0px;height:23.5px;border-width:2.5px"></div>
<div class="w" style="left:180px;top:400.92px;width:39px;height:18.5px;background:#fbfbfb"></div>
<div class="t" style="left:182px;top:404.56px;font-size:12px;color:#1e1e1e;letter-spacing:-0.8px;">13</div>
<div class="fr" style="left:234.5px;top:398.42px;width:43.5px;height:23.5px;border-width:2.5px"></div>
<div class="w" style="left:237px;top:400.92px;width:38.5px;height:18.5px;background:#fbfbfb"></div>
<div class="t" style="left:239px;top:404.56px;font-size:12px;color:#1e1e1e;letter-spacing:-1px;">199</div>
<div class="ring" style="left:290.7px;top:397.62px;width:112.3px;height:24.2px"></div>
<div class="t" style="left:291px;width:89px;text-align:center;top:403.34px;font-size:11.2px;letter-spacing:-0.2px">LJ_rgBIP10V</div>
<svg class="ab" style="left:381px;top:408.22px" width="14" height="8"><path d="M0.8 0.5H13.2L7 7.5Z" fill="none" stroke="#8a8a8a" stroke-width="1.1"/></svg>
<div class="fr" style="left:415.5px;top:398.42px;width:67.0px;height:23.5px;border-width:2.5px"></div>
<div class="w" style="left:418px;top:400.92px;width:62px;height:18.5px;background:#c4c4c4"></div>
<div class="t" style="left:420px;top:404.66px;font-size:12px;color:#9c9c9c;letter-spacing:-0.55px;">0.000000</div>
<div class="fr" style="left:768.5px;top:398.42px;width:78.0px;height:23.5px;border-width:2.5px"></div>
<div class="w" style="left:771px;top:400.92px;width:73px;height:18.5px;background:#c4c4c4"></div>
<div class="t" style="left:773px;top:404.66px;font-size:12px;color:#9c9c9c;letter-spacing:-0.55px;">0.000000</div>
<div class="fr" style="left:493.5px;top:398.42px;width:265.5px;height:23.5px;border-width:2.5px"></div>
<div class="w" style="left:496px;top:400.92px;width:260.5px;height:18.5px;background:#fbfbfb"></div>
<div class="t" style="left:498px;top:404.56px;font-size:12px;color:#1e1e1e;">y=n</div>
<div class="led off" style="left:859px;top:399.72px"></div>
<div class="t" style="left:140px;width:28.5px;text-align:right;top:430.20px;font-size:12px">14</div>
<div class="fr" style="left:177.5px;top:424.26px;width:44.0px;height:23.5px;border-width:2.5px"></div>
<div class="w" style="left:180px;top:426.76px;width:39px;height:18.5px;background:#fbfbfb"></div>
<div class="t" style="left:182px;top:430.40px;font-size:12px;color:#1e1e1e;letter-spacing:-0.8px;">14</div>
<div class="fr" style="left:234.5px;top:424.26px;width:43.5px;height:23.5px;border-width:2.5px"></div>
<div class="w" style="left:237px;top:426.76px;width:38.5px;height:18.5px;background:#fbfbfb"></div>
<div class="t" style="left:239px;top:430.40px;font-size:12px;color:#1e1e1e;letter-spacing:-1px;">199</div>
<div class="ring" style="left:290.7px;top:423.46px;width:112.3px;height:24.2px"></div>
<div class="t" style="left:291px;width:89px;text-align:center;top:429.18px;font-size:11.2px;letter-spacing:-0.2px">LJ_rgBIP10V</div>
<svg class="ab" style="left:381px;top:434.06px" width="14" height="8"><path d="M0.8 0.5H13.2L7 7.5Z" fill="none" stroke="#8a8a8a" stroke-width="1.1"/></svg>
<div class="fr" style="left:415.5px;top:424.26px;width:67.0px;height:23.5px;border-width:2.5px"></div>
<div class="w" style="left:418px;top:426.76px;width:62px;height:18.5px;background:#c4c4c4"></div>
<div class="t" style="left:420px;top:430.50px;font-size:12px;color:#9c9c9c;letter-spacing:-0.55px;">0.000000</div>
<div class="fr" style="left:768.5px;top:424.26px;width:78.0px;height:23.5px;border-width:2.5px"></div>
<div class="w" style="left:771px;top:426.76px;width:73px;height:18.5px;background:#c4c4c4"></div>
<div class="t" style="left:773px;top:430.50px;font-size:12px;color:#9c9c9c;letter-spacing:-0.55px;">0.000000</div>
<div class="fr" style="left:493.5px;top:424.26px;width:265.5px;height:23.5px;border-width:2.5px"></div>
<div class="w" style="left:496px;top:426.76px;width:260.5px;height:18.5px;background:#fbfbfb"></div>
<div class="t" style="left:498px;top:430.40px;font-size:12px;color:#1e1e1e;">y=o</div>
<div class="led off" style="left:859px;top:425.56px"></div>
<div class="t" style="left:140px;width:28.5px;text-align:right;top:456.04px;font-size:12px">15</div>
<div class="fr" style="left:177.5px;top:450.1px;width:44.0px;height:23.5px;border-width:2.5px"></div>
<div class="w" style="left:180px;top:452.6px;width:39px;height:18.5px;background:#fbfbfb"></div>
<div class="t" style="left:182px;top:456.24px;font-size:12px;color:#1e1e1e;letter-spacing:-0.8px;">15</div>
<div class="fr" style="left:234.5px;top:450.1px;width:43.5px;height:23.5px;border-width:2.5px"></div>
<div class="w" style="left:237px;top:452.6px;width:38.5px;height:18.5px;background:#fbfbfb"></div>
<div class="t" style="left:239px;top:456.24px;font-size:12px;color:#1e1e1e;letter-spacing:-1px;">199</div>
<div class="ring" style="left:290.7px;top:449.30px;width:112.3px;height:24.2px"></div>
<div class="t" style="left:291px;width:89px;text-align:center;top:455.02px;font-size:11.2px;letter-spacing:-0.2px">LJ_rgBIP10V</div>
<svg class="ab" style="left:381px;top:459.90px" width="14" height="8"><path d="M0.8 0.5H13.2L7 7.5Z" fill="none" stroke="#8a8a8a" stroke-width="1.1"/></svg>
<div class="fr" style="left:415.5px;top:450.1px;width:67.0px;height:23.5px;border-width:2.5px"></div>
<div class="w" style="left:418px;top:452.6px;width:62px;height:18.5px;background:#c4c4c4"></div>
<div class="t" style="left:420px;top:456.34px;font-size:12px;color:#9c9c9c;letter-spacing:-0.55px;">0.000000</div>
<div class="fr" style="left:768.5px;top:450.1px;width:78.0px;height:23.5px;border-width:2.5px"></div>
<div class="w" style="left:771px;top:452.6px;width:73px;height:18.5px;background:#c4c4c4"></div>
<div class="t" style="left:773px;top:456.34px;font-size:12px;color:#9c9c9c;letter-spacing:-0.55px;">0.000000</div>
<div class="fr" style="left:493.5px;top:450.1px;width:265.5px;height:23.5px;border-width:2.5px"></div>
<div class="w" style="left:496px;top:452.6px;width:260.5px;height:18.5px;background:#fbfbfb"></div>
<div class="t" style="left:498px;top:456.24px;font-size:12px;color:#1e1e1e;">y=p</div>
<div class="led off" style="left:859px;top:451.40px"></div>
<div class="ab" style="left:170.5px;top:60px;width:55px;height:28px;border:3.3px solid #7a1a2c;border-radius:9px"></div>
<div class="t" style="left:5.5px;top:501.01px;font-size:11.8px;color:#1e1e1e;">Current Data File</div>
<div class="fr" style="left:5px;top:516.5px;width:425px;height:36px"></div>
<div class="ab" style="left:8px;top:519.5px;width:419px;height:30px;background:#d4d4d4"></div>
<div class="ab" style="left:8px;top:519.5px;width:9.5px;height:30px;background:#c6c6c6"></div>
<svg class="ab" style="left:9px;top:526px" width="8" height="14"><circle cx="3.2" cy="5.5" r="1.8" fill="none" stroke="#222" stroke-width="1.2"/><circle cx="4.3" cy="9.6" r="1.8" fill="none" stroke="#222" stroke-width="1.2"/></svg>
<div class="t" style="left:18.5px;top:523.29px;font-size:12.3px;color:#1e1e1e;">C:\Users\solom\Documents\data_002\data_1.dat</div>
<div class="t" style="left:5.5px;top:565.21px;font-size:11.8px;color:#1e1e1e;">Error Message</div>
<div class="fr" style="left:5px;top:580.5px;width:427px;height:35px"></div>
<div class="ab" style="left:8px;top:583.5px;width:421px;height:29px;background:#d4d4d4"></div>
<div class="t" style="left:9.8px;top:586.84px;font-size:12px;color:#1e1e1e;">No Error</div>
<div class="t" style="left:476px;top:489.87px;font-size:11.5px;color:#1e1e1e;">Max File Size (Bytes)</div>
<div class="fr" style="left:474.5px;top:504.5px;width:92.5px;height:23.5px;border-width:3px"></div>
<div class="w" style="left:477.5px;top:507.5px;width:86.5px;height:17.5px;background:#fbfbfb"></div>
<div class="t" style="left:479.5px;top:510.34px;font-size:12px;color:#1e1e1e;letter-spacing:-0.4px;">32768</div>
<div class="spin" style="left:464.0px;top:503.0px;width:12px;height:23.5px"></div>
<svg class="ab" style="left:463.5px;top:503.5px" width="13" height="23"><path d="M6.5 3.5L4.5 8.5M6.5 3.5L8.5 8.5M6.5 19.5L4.5 14.5M6.5 19.5L8.5 14.5" stroke="#555" stroke-width="1.1" fill="none"/><path d="M3 11.5H10" stroke="#777" stroke-width="1"/></svg>
<div class="btn" style="left:462px;top:530.5px;width:135.5px;height:35px"></div>
<div class="t" style="left:462px;width:135.5px;text-align:center;top:534.84px;font-size:12px">Change Working</div>
<div class="t" style="left:462px;width:135.5px;text-align:center;top:549.84px;font-size:12px">Directory</div>
<div class="btn" style="left:462px;top:566.5px;width:135.5px;height:24px"></div>
<div class="t" style="left:462px;width:135.5px;text-align:center;top:573.18px;font-size:11.6px">Select New Configs</div>
<div class="btn" style="left:462px;top:591.5px;width:135.5px;height:24.5px"></div>
<div class="t" style="left:462px;width:135.5px;text-align:center;top:598.18px;font-size:11.6px">Save Current Config</div>
<div class="t" style="left:639.5px;top:485.84px;font-size:12px;color:#1e1e1e;">-"a" - "p" correspond to the raw Voltage value</div>
<div class="t" style="left:639.5px;top:498.84px;font-size:12px;color:#1e1e1e;">  from the 1st through 16th row.</div>
<div class="t" style="left:639.5px;top:511.84px;font-size:12px;color:#1e1e1e;">-The scaled output value is "y".</div>
<div class="t" style="left:639.5px;top:524.84px;font-size:12px;color:#1e1e1e;">-If your equation has an error, the output</div>
<div class="t" style="left:639.5px;top:537.84px;font-size:12px;color:#1e1e1e;">  will be zero.</div>
<div class="t" style="left:623.5px;top:574.62px;font-size:12.5px;color:#1e1e1e;letter-spacing:-0.1px;"># of iterations</div>
<div class="t" style="left:704.5px;top:574.79px;font-size:12.3px;color:#1e1e1e;">ms per iteration</div>
<div class="fr" style="left:623.2px;top:590.8px;width:54.5px;height:22.0px;border-width:2.5px"></div>
<div class="w" style="left:625.7px;top:593.3px;width:49.5px;height:17px;background:#d4d4d4"></div>
<div class="t" style="left:627.7px;top:597.34px;font-size:12px;color:#1e1e1e;letter-spacing:0.3px;">111</div>
<div class="fr" style="left:704.0px;top:590.8px;width:54.5px;height:22.0px;border-width:2.5px"></div>
<div class="w" style="left:706.5px;top:593.3px;width:49.5px;height:17px;background:#d4d4d4"></div>
<div class="t" style="left:708.5px;top:597.34px;font-size:12px;color:#1e1e1e;letter-spacing:-0.5px;">500</div>
<div class="t" style="left:808px;top:564.67px;font-size:11.5px;color:#1e1e1e;"># Scans On Graph</div>
<div class="fr" style="left:820.5px;top:578px;width:62px;height:24px;border-width:3px"></div>
<div class="w" style="left:823.5px;top:581px;width:56px;height:18px;background:#fbfbfb"></div>
<div class="t" style="left:825.5px;top:584.34px;font-size:12px;color:#1e1e1e;letter-spacing:-0.7px;">1000</div>
<div class="spin" style="left:810.0px;top:577.0px;width:12px;height:23.5px"></div>
<svg class="ab" style="left:809.5px;top:577.5px" width="13" height="23"><path d="M6.5 3.5L4.5 8.5M6.5 3.5L8.5 8.5M6.5 19.5L4.5 14.5M6.5 19.5L8.5 14.5" stroke="#555" stroke-width="1.1" fill="none"/><path d="M3 11.5H10" stroke="#777" stroke-width="1"/></svg>
<div class="ab" style="left:0;top:618px;width:805px;height:368px;background:#c2c2c2;border-left:3px solid #ababab"></div>
<div class="ab" style="left:3px;top:618px;width:21px;height:368px;background:linear-gradient(90deg,#c6c6c6,#d5d5d5 15%,#d4d4d4 50%,#c8c8c8 62%,#c2c2c2)"></div>
<div class="ab" style="left:0;top:618px;width:805px;height:5px;background:linear-gradient(#b9b9b9,#c4c4c4 40%,#d8d8d8 60%,#d6d6d6)"></div>
<div class="ab" style="left:780px;top:621px;width:25px;height:365px;background:linear-gradient(90deg,#d0d0d0,#c0c0c0 60%,#a2a2a2 95%,#7c7c7c)"></div>
<div class="ab" style="left:0;top:984px;width:805px;height:2px;background:#a4a4a4"></div>
<svg class="ab" style="left:100.5px;top:630.5px" width="679.0" height="313.5" viewBox="100.5 630.5 679.0 313.5"><rect x="100.5" y="630.5" width="679.0" height="313.5" fill="#000200"/><path d="M106.40 630.5V944.0M112.29 630.5V944.0M118.19 630.5V944.0M124.08 630.5V944.0M135.88 630.5V944.0M141.77 630.5V944.0M147.67 630.5V944.0M153.56 630.5V944.0M165.36 630.5V944.0M171.25 630.5V944.0M177.15 630.5V944.0M183.04 630.5V944.0M194.84 630.5V944.0M200.73 630.5V944.0M206.63 630.5V944.0M212.52 630.5V944.0M224.32 630.5V944.0M230.21 630.5V944.0M236.11 630.5V944.0M242.00 630.5V944.0M253.80 630.5V944.0M259.69 630.5V944.0M265.59 630.5V944.0M271.48 630.5V944.0M283.28 630.5V944.0M289.17 630.5V944.0M295.07 630.5V944.0M300.96 630.5V944.0M312.76 630.5V944.0M318.65 630.5V944.0M324.55 630.5V944.0M330.44 630.5V944.0M342.24 630.5V944.0M348.13 630.5V944.0M354.03 630.5V944.0M359.92 630.5V944.0M371.72 630.5V944.0M377.61 630.5V944.0M383.51 630.5V944.0M389.40 630.5V944.0M401.20 630.5V944.0M407.09 630.5V944.0M412.99 630.5V944.0M418.88 630.5V944.0M430.68 630.5V944.0M436.57 630.5V944.0M442.47 630.5V944.0M448.36 630.5V944.0M460.16 630.5V944.0M466.05 630.5V944.0M471.95 630.5V944.0M477.84 630.5V944.0M489.64 630.5V944.0M495.53 630.5V944.0M501.43 630.5V944.0M507.32 630.5V944.0M519.12 630.5V944.0M525.01 630.5V944.0M530.91 630.5V944.0M536.80 630.5V944.0M548.60 630.5V944.0M554.49 630.5V944.0M560.39 630.5V944.0M566.28 630.5V944.0M578.08 630.5V944.0M583.97 630.5V944.0M589.87 630.5V944.0M595.76 630.5V944.0M607.56 630.5V944.0M613.45 630.5V944.0M619.35 630.5V944.0M625.24 630.5V944.0M637.04 630.5V944.0M642.93 630.5V944.0M648.83 630.5V944.0M654.72 630.5V944.0M666.52 630.5V944.0M672.41 630.5V944.0M678.31 630.5V944.0M684.20 630.5V944.0M696.00 630.5V944.0M701.89 630.5V944.0M707.79 630.5V944.0M713.68 630.5V944.0M725.48 630.5V944.0M731.37 630.5V944.0M737.27 630.5V944.0M743.16 630.5V944.0M754.96 630.5V944.0M760.85 630.5V944.0M766.75 630.5V944.0M772.64 630.5V944.0M100.5 636.68H779.5M100.5 642.36H779.5M100.5 648.05H779.5M100.5 653.73H779.5M100.5 665.09H779.5M100.5 670.77H779.5M100.5 676.45H779.5M100.5 682.14H779.5M100.5 693.50H779.5M100.5 699.18H779.5M100.5 704.86H779.5M100.5 710.55H779.5M100.5 721.91H779.5M100.5 727.59H779.5M100.5 733.27H779.5M100.5 738.95H779.5M100.5 750.32H779.5M100.5 756.00H779.5M100.5 761.68H779.5M100.5 767.36H779.5M100.5 778.73H779.5M100.5 784.41H779.5M100.5 790.09H779.5M100.5 795.77H779.5M100.5 807.14H779.5M100.5 812.82H779.5M100.5 818.50H779.5M100.5 824.18H779.5M100.5 835.55H779.5M100.5 841.23H779.5M100.5 846.91H779.5M100.5 852.59H779.5M100.5 863.95H779.5M100.5 869.64H779.5M100.5 875.32H779.5M100.5 881.00H779.5M100.5 892.36H779.5M100.5 898.05H779.5M100.5 903.73H779.5M100.5 909.41H779.5M100.5 920.77H779.5M100.5 926.45H779.5M100.5 932.14H779.5M100.5 937.82H779.5" stroke="#1a281a" stroke-width="1" fill="none"/><path d="M100.50 630.5V944.0M129.98 630.5V944.0M159.46 630.5V944.0M188.94 630.5V944.0M218.42 630.5V944.0M247.90 630.5V944.0M277.38 630.5V944.0M306.86 630.5V944.0M336.34 630.5V944.0M365.82 630.5V944.0M395.30 630.5V944.0M424.78 630.5V944.0M454.26 630.5V944.0M483.74 630.5V944.0M513.22 630.5V944.0M542.70 630.5V944.0M572.18 630.5V944.0M601.66 630.5V944.0M631.14 630.5V944.0M660.62 630.5V944.0M690.10 630.5V944.0M719.58 630.5V944.0M749.06 630.5V944.0M778.54 630.5V944.0M100.5 631.00H779.5M100.5 659.41H779.5M100.5 687.82H779.5M100.5 716.23H779.5M100.5 744.64H779.5M100.5 773.05H779.5M100.5 801.45H779.5M100.5 829.86H779.5M100.5 858.27H779.5M100.5 886.68H779.5M100.5 915.09H779.5M100.5 943.50H779.5" stroke="#2e682e" stroke-width="1" fill="none"/><path d="M242.3 660.4H337" stroke="#3aa63a" stroke-width="1.4" fill="none"/><path d="M337 660.4H377" stroke="#b02840" stroke-width="1.8" fill="none"/><path d="M118.7 657L121 720L123 800L125 943.5H332L335 800L337.5 660.4" stroke="#ff4a52" stroke-width="1.5" fill="none"/><path d="M100.5 660.4H120" stroke="#f0f0f0" stroke-width="1.7" fill="none"/><path d="M120 660.2H235.5" stroke="#c8f4c0" stroke-width="1.8" fill="none"/><path d="M235.5 660.4L242.3 667.8H372L378.3 660.2" stroke="#ececec" stroke-width="1.6" fill="none"/><path d="M377 660.1H773" stroke="#f2c6ca" stroke-width="1.8" fill="none"/></svg>
<div class="ab" style="left:125px;top:943.5px;width:207px;height:1.5px;background:#e89aa4"></div>
<div class="t" style="left:20px;width:71.5px;text-align:right;top:625.44px;font-size:12px;letter-spacing:-0.45px;-webkit-text-stroke:0.2px #222;color:#222">1000.0</div>
<div class="ab" style="left:94px;top:630.5px;width:5px;height:1.2px;background:#333"></div>
<div class="t" style="left:20px;width:71.5px;text-align:right;top:653.85px;font-size:12px;letter-spacing:-0.45px;-webkit-text-stroke:0.2px #222;color:#222">0.0</div>
<div class="ab" style="left:94px;top:658.9090909090909px;width:5px;height:1.2px;background:#333"></div>
<div class="t" style="left:20px;width:71.5px;text-align:right;top:682.26px;font-size:12px;letter-spacing:-0.45px;-webkit-text-stroke:0.2px #222;color:#222">-1000.0</div>
<div class="ab" style="left:94px;top:687.3181818181819px;width:5px;height:1.2px;background:#333"></div>
<div class="t" style="left:20px;width:71.5px;text-align:right;top:710.67px;font-size:12px;letter-spacing:-0.45px;-webkit-text-stroke:0.2px #222;color:#222">-2000.0</div>
<div class="ab" style="left:94px;top:715.7272727272727px;width:5px;height:1.2px;background:#333"></div>
<div class="t" style="left:20px;width:71.5px;text-align:right;top:739.08px;font-size:12px;letter-spacing:-0.45px;-webkit-text-stroke:0.2px #222;color:#222">-3000.0</div>
<div class="ab" style="left:94px;top:744.1363636363636px;width:5px;height:1.2px;background:#333"></div>
<div class="t" style="left:20px;width:71.5px;text-align:right;top:767.49px;font-size:12px;letter-spacing:-0.45px;-webkit-text-stroke:0.2px #222;color:#222">-4000.0</div>
<div class="ab" style="left:94px;top:772.5454545454545px;width:5px;height:1.2px;background:#333"></div>
<div class="t" style="left:20px;width:71.5px;text-align:right;top:795.90px;font-size:12px;letter-spacing:-0.45px;-webkit-text-stroke:0.2px #222;color:#222">-5000.0</div>
<div class="ab" style="left:94px;top:800.9545454545455px;width:5px;height:1.2px;background:#333"></div>
<div class="t" style="left:20px;width:71.5px;text-align:right;top:824.31px;font-size:12px;letter-spacing:-0.45px;-webkit-text-stroke:0.2px #222;color:#222">-6000.0</div>
<div class="ab" style="left:94px;top:829.3636363636364px;width:5px;height:1.2px;background:#333"></div>
<div class="t" style="left:20px;width:71.5px;text-align:right;top:852.71px;font-size:12px;letter-spacing:-0.45px;-webkit-text-stroke:0.2px #222;color:#222">-7000.0</div>
<div class="ab" style="left:94px;top:857.7727272727273px;width:5px;height:1.2px;background:#333"></div>
<div class="t" style="left:20px;width:71.5px;text-align:right;top:881.12px;font-size:12px;letter-spacing:-0.45px;-webkit-text-stroke:0.2px #222;color:#222">-8000.0</div>
<div class="ab" style="left:94px;top:886.1818181818182px;width:5px;height:1.2px;background:#333"></div>
<div class="t" style="left:20px;width:71.5px;text-align:right;top:909.53px;font-size:12px;letter-spacing:-0.45px;-webkit-text-stroke:0.2px #222;color:#222">-9000.0</div>
<div class="ab" style="left:94px;top:914.5909090909091px;width:5px;height:1.2px;background:#333"></div>
<div class="t" style="left:20px;width:71.5px;text-align:right;top:937.94px;font-size:12px;letter-spacing:-0.45px;-webkit-text-stroke:0.2px #222;color:#222">-10000.0</div>
<div class="ab" style="left:94px;top:943.0px;width:5px;height:1.2px;background:#333"></div>
<div class="t" style="left:81.0px;width:40px;text-align:center;top:953.84px;font-size:12px;-webkit-text-stroke:0.2px #222;color:#222">0.0</div>
<div class="ab" style="left:100.4px;top:946.5px;width:1.2px;height:5px;background:#333"></div>
<div class="t" style="left:110.47999999999999px;width:40px;text-align:center;top:953.84px;font-size:12px;-webkit-text-stroke:0.2px #222;color:#222">2.5</div>
<div class="ab" style="left:129.88px;top:946.5px;width:1.2px;height:5px;background:#333"></div>
<div class="t" style="left:139.96px;width:40px;text-align:center;top:953.84px;font-size:12px;-webkit-text-stroke:0.2px #222;color:#222">5.0</div>
<div class="ab" style="left:159.36px;top:946.5px;width:1.2px;height:5px;background:#333"></div>
<div class="t" style="left:169.44px;width:40px;text-align:center;top:953.84px;font-size:12px;-webkit-text-stroke:0.2px #222;color:#222">7.5</div>
<div class="ab" style="left:188.84px;top:946.5px;width:1.2px;height:5px;background:#333"></div>
<div class="t" style="left:198.92000000000002px;width:40px;text-align:center;top:953.84px;font-size:12px;-webkit-text-stroke:0.2px #222;color:#222">10.0</div>
<div class="ab" style="left:218.32000000000002px;top:946.5px;width:1.2px;height:5px;background:#333"></div>
<div class="t" style="left:228.4px;width:40px;text-align:center;top:953.84px;font-size:12px;-webkit-text-stroke:0.2px #222;color:#222">12.5</div>
<div class="ab" style="left:247.8px;top:946.5px;width:1.2px;height:5px;background:#333"></div>
<div class="t" style="left:257.88px;width:40px;text-align:center;top:953.84px;font-size:12px;-webkit-text-stroke:0.2px #222;color:#222">15.0</div>
<div class="ab" style="left:277.28px;top:946.5px;width:1.2px;height:5px;background:#333"></div>
<div class="t" style="left:287.36px;width:40px;text-align:center;top:953.84px;font-size:12px;-webkit-text-stroke:0.2px #222;color:#222">17.5</div>
<div class="ab" style="left:306.76px;top:946.5px;width:1.2px;height:5px;background:#333"></div>
<div class="t" style="left:316.84000000000003px;width:40px;text-align:center;top:953.84px;font-size:12px;-webkit-text-stroke:0.2px #222;color:#222">20.0</div>
<div class="ab" style="left:336.24px;top:946.5px;width:1.2px;height:5px;background:#333"></div>
<div class="t" style="left:346.32px;width:40px;text-align:center;top:953.84px;font-size:12px;-webkit-text-stroke:0.2px #222;color:#222">22.5</div>
<div class="ab" style="left:365.71999999999997px;top:946.5px;width:1.2px;height:5px;background:#333"></div>
<div class="t" style="left:375.8px;width:40px;text-align:center;top:953.84px;font-size:12px;-webkit-text-stroke:0.2px #222;color:#222">25.0</div>
<div class="ab" style="left:395.2px;top:946.5px;width:1.2px;height:5px;background:#333"></div>
<div class="t" style="left:405.28000000000003px;width:40px;text-align:center;top:953.84px;font-size:12px;-webkit-text-stroke:0.2px #222;color:#222">27.5</div>
<div class="ab" style="left:424.68px;top:946.5px;width:1.2px;height:5px;background:#333"></div>
<div class="t" style="left:434.76px;width:40px;text-align:center;top:953.84px;font-size:12px;-webkit-text-stroke:0.2px #222;color:#222">30.0</div>
<div class="ab" style="left:454.15999999999997px;top:946.5px;width:1.2px;height:5px;background:#333"></div>
<div class="t" style="left:464.24px;width:40px;text-align:center;top:953.84px;font-size:12px;-webkit-text-stroke:0.2px #222;color:#222">32.5</div>
<div class="ab" style="left:483.64px;top:946.5px;width:1.2px;height:5px;background:#333"></div>
<div class="t" style="left:493.72px;width:40px;text-align:center;top:953.84px;font-size:12px;-webkit-text-stroke:0.2px #222;color:#222">35.0</div>
<div class="ab" style="left:513.12px;top:946.5px;width:1.2px;height:5px;background:#333"></div>
<div class="t" style="left:523.2px;width:40px;text-align:center;top:953.84px;font-size:12px;-webkit-text-stroke:0.2px #222;color:#222">37.5</div>
<div class="ab" style="left:542.6px;top:946.5px;width:1.2px;height:5px;background:#333"></div>
<div class="t" style="left:552.6800000000001px;width:40px;text-align:center;top:953.84px;font-size:12px;-webkit-text-stroke:0.2px #222;color:#222">40.0</div>
<div class="ab" style="left:572.08px;top:946.5px;width:1.2px;height:5px;background:#333"></div>
<div class="t" style="left:582.1600000000001px;width:40px;text-align:center;top:953.84px;font-size:12px;-webkit-text-stroke:0.2px #222;color:#222">42.5</div>
<div class="ab" style="left:601.5600000000001px;top:946.5px;width:1.2px;height:5px;background:#333"></div>
<div class="t" style="left:611.64px;width:40px;text-align:center;top:953.84px;font-size:12px;-webkit-text-stroke:0.2px #222;color:#222">45.0</div>
<div class="ab" style="left:631.04px;top:946.5px;width:1.2px;height:5px;background:#333"></div>
<div class="t" style="left:641.12px;width:40px;text-align:center;top:953.84px;font-size:12px;-webkit-text-stroke:0.2px #222;color:#222">47.5</div>
<div class="ab" style="left:660.52px;top:946.5px;width:1.2px;height:5px;background:#333"></div>
<div class="t" style="left:670.6px;width:40px;text-align:center;top:953.84px;font-size:12px;-webkit-text-stroke:0.2px #222;color:#222">50.0</div>
<div class="ab" style="left:690.0px;top:946.5px;width:1.2px;height:5px;background:#333"></div>
<div class="t" style="left:700.08px;width:40px;text-align:center;top:953.84px;font-size:12px;-webkit-text-stroke:0.2px #222;color:#222">52.5</div>
<div class="ab" style="left:719.48px;top:946.5px;width:1.2px;height:5px;background:#333"></div>
<div class="t" style="left:729.5600000000001px;width:40px;text-align:center;top:953.84px;font-size:12px;-webkit-text-stroke:0.2px #222;color:#222">55.0</div>
<div class="ab" style="left:748.96px;top:946.5px;width:1.2px;height:5px;background:#333"></div>
<div class="t" style="left:759.04px;width:40px;text-align:center;top:953.84px;font-size:12px;-webkit-text-stroke:0.2px #222;color:#222">57.5</div>
<div class="ab" style="left:778.4399999999999px;top:946.5px;width:1.2px;height:5px;background:#333"></div>
<div class="t" style="left:424.5px;top:971.24px;font-size:12px;color:#222;-webkit-text-stroke:0.2px #222">Time</div>
<div class="t" style="left:28.5px;top:819px;font-size:13px;color:#222;transform-origin:0 0;transform:rotate(-90deg)">Amplitude</div>
<div class="ab" style="left:806px;top:608px;width:96px;height:378px;background:#c9c9c9"></div>
<div class="ab" style="left:806px;top:608px;width:11px;height:378px;background:linear-gradient(90deg,#c2c2c2,#d6d6d6 40%,#cfcfcf)"></div>
<div class="ab" style="left:886px;top:608px;width:16px;height:378px;background:linear-gradient(90deg,#d8d8d8,#bcbcbc 60%,#8e8e8e 90%,#5a5a5a)"></div>
<div class="ab" style="left:868.5px;top:609.5px;width:17.5px;height:374px;background:#000"></div>
<div class="t" style="left:821px;top:613.0px;font-size:12px;color:#222">Plot 0</div>
<div class="t" style="left:821px;top:636.73px;font-size:12px;color:#222">Plot 1</div>
<div class="t" style="left:821px;top:660.46px;font-size:12px;color:#222">Plot 2</div>
<div class="t" style="left:821px;top:684.19px;font-size:12px;color:#222">Plot 3</div>
<div class="t" style="left:821px;top:707.92px;font-size:12px;color:#222">Plot 4</div>
<div class="t" style="left:821px;top:731.65px;font-size:12px;color:#222">Plot 5</div>
<div class="t" style="left:821px;top:755.38px;font-size:12px;color:#222">Plot 6</div>
<div class="t" style="left:821px;top:779.11px;font-size:12px;color:#222">Plot 7</div>
<div class="t" style="left:821px;top:802.84px;font-size:12px;color:#222">Plot 8</div>
<div class="t" style="left:821px;top:826.5699999999999px;font-size:12px;color:#222">Plot 9</div>
<div class="t" style="left:821px;top:850.3px;font-size:12px;color:#222">Plot 10</div>
<div class="t" style="left:821px;top:874.03px;font-size:12px;color:#222">Plot 11</div>
<div class="t" style="left:821px;top:897.76px;font-size:12px;color:#222">Plot 12</div>
<div class="t" style="left:821px;top:921.49px;font-size:12px;color:#222">Plot 13</div>
<div class="t" style="left:821px;top:945.22px;font-size:12px;color:#222">Plot 14</div>
<div class="t" style="left:821px;top:968.95px;font-size:12px;color:#222">Plot 15</div>
<svg class="ab" style="left:0;top:0" width="928" height="1000"><path d="M870.5 623.5L882.5 612.5L886 615.5" stroke="#e8e8e8" stroke-width="1" fill="none"/><path d="M870.5 647.2L882.5 636.2L886 639.2" stroke="#d04050" stroke-width="1" fill="none"/><path d="M870.5 671.0L882.5 660.0L886 663.0" stroke="#40c040" stroke-width="1" fill="none"/><path d="M870.5 694.7L882.5 683.7L886 686.7" stroke="#4a90e0" stroke-width="1" fill="none"/><path d="M870.5 718.4L882.5 707.4L886 710.4" stroke="#c8c060" stroke-width="1" fill="none"/><path d="M870.5 742.1L882.5 731.1L886 734.1" stroke="#9060d0" stroke-width="1" fill="none"/><path d="M870.5 765.9L882.5 754.9L886 757.9" stroke="#d0a040" stroke-width="1" fill="none"/><path d="M870.5 789.6L882.5 778.6L886 781.6" stroke="#4848c8" stroke-width="1" fill="none"/><path d="M870.5 813.3L882.5 802.3L886 805.3" stroke="#d05060" stroke-width="1" fill="none"/><path d="M870.5 837.1L882.5 826.1L886 829.1" stroke="#40c090" stroke-width="1" fill="none"/><path d="M870.5 860.8L882.5 849.8L886 852.8" stroke="#a8a8a8" stroke-width="1" fill="none"/><path d="M870.5 884.5L882.5 873.5L886 876.5" stroke="#d04050" stroke-width="1" fill="none"/><path d="M870.5 908.3L882.5 897.3L886 900.3" stroke="#40c040" stroke-width="1" fill="none"/><path d="M870.5 932.0L882.5 921.0L886 924.0" stroke="#4a90e0" stroke-width="1" fill="none"/><path d="M870.5 955.7L882.5 944.7L886 947.7" stroke="#c8c060" stroke-width="1" fill="none"/><path d="M870.5 979.5L882.5 968.5L886 971.5" stroke="#9060d0" stroke-width="1" fill="none"/></svg>
<div class="ab" style="left:913px;top:32px;width:15px;height:968px;background:#f0f0f0"></div>
<div class="ab" style="left:915px;top:199px;width:13px;height:617px;background:#cdcdcd"></div>
<svg class="ab" style="left:918px;top:37px" width="10" height="8"><path d="M1.5 6L4.5 2.5L7.5 6" stroke="#505050" stroke-width="1.8" fill="none"/></svg>
<svg class="ab" style="left:917px;top:977px" width="10" height="8"><path d="M1 2L5 6L9 2" stroke="#606060" stroke-width="1.5" fill="none"/></svg>
<div class="ab" style="left:0;top:985.5px;width:913px;height:2px;background:#8c8c8c"></div>
<div class="ab" style="left:0;top:987.5px;width:928px;height:12.5px;background:#f0f0f0"></div>
<div class="ab" style="left:0;top:987.5px;width:913px;height:2.5px;background:#fbfbfb"></div>
<div class="ab" style="left:161px;top:990px;width:592px;height:10px;background:#cdcdcd"></div>
<svg class="ab" style="left:3px;top:992px" width="8" height="10"><path d="M6 1.5L2.5 5L6 8.5" stroke="#4a4a4a" stroke-width="1.8" fill="none"/></svg>
<svg class="ab" style="left:902px;top:992px" width="8" height="10"><path d="M2 1.5L5.5 5L2 8.5" stroke="#4a4a4a" stroke-width="1.8" fill="none"/></svg>
</body></html>
